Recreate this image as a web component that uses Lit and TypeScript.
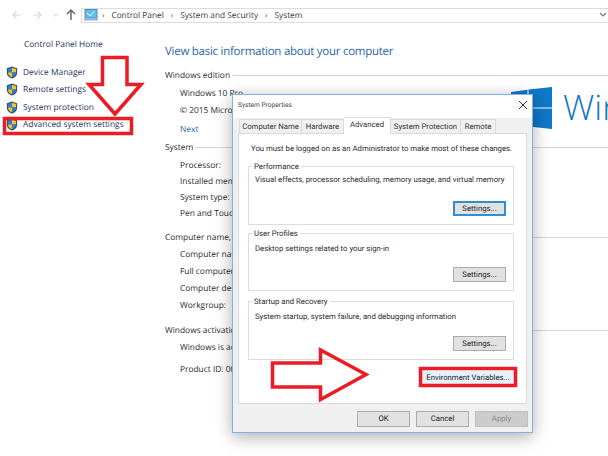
import { LitElement, html, css, svg } from "lit";
import { customElement } from "lit/decorators.js";

const shield = svg`<svg class="shield" width="12" height="13" viewBox="0 0 14 15">
  <path d="M7 .5 L13 2.5 V8 C13 11.500 10 13.500 7 14.500 C4 13.500 1 11.500 1 8 V2.500 Z" fill="#39506e"/>
  <path d="M7 2 V7.500 H2.300 V3.500 Z" fill="#2f7fd0"/>
  <path d="M7 2 L11.700 3.500 V7.500 H7 Z" fill="#f3c334"/>
  <path d="M2.300 7.500 H7 V13 C4.500 12.200 2.300 10.500 2.300 7.500 Z" fill="#f3c334"/>
  <path d="M7 7.500 H11.700 C11.700 10.500 9.500 12.200 7 13 Z" fill="#2f7fd0"/>
</svg>`;

@customElement("app-root")
export class AppRoot extends LitElement {
  static styles = css`
    :host { display: block; position: relative; width: 608px; height: 456px; overflow: hidden; background: #fff;
      font-family: "Open Sans", "Noto Sans", sans-serif; font-size: 8.4px; color: #2b2b2b; text-rendering: geometricPrecision; }
    .nav { display: flex; align-items: center; height: 30px; }
    .arrows { width: 81px; flex: none; display: block; }
    .crumb { flex: 1; height: 15px; border: 1px solid #dcdcdc; border-right: 0; display: flex; align-items: center;
      font-size: 8.3px; color: #3a3a3a; padding-left: 2px; box-sizing: border-box; }
    .crumb .sep { margin: 0 7px 0 4px; font-size: 8px; color: #555; }
    .crumb .sep.w { margin: 0 7px 0 7px; }
    .crumb .pc { margin-right: 0; display: block; }
    .crumb .chev { margin-left: auto; margin-right: 1px; display: block; }
    .body { display: flex; }
    .side { width: 165px; flex: none; padding: 9px 0 0 6px; box-sizing: border-box; color: #27335f; }
    .home { padding-left: 18px; height: 25px; line-height: 12px; }
    .link { height: 17.3px; display: flex; align-items: center; gap: 5px; white-space: nowrap; }
    .main { flex: 1; min-width: 0; padding-top: 13px; }
    h1 { margin: 0 0 8px; font-size: 11.5px; font-weight: 400; color: #2a67a8; line-height: 18px; white-space: nowrap; letter-spacing: -0.26px; }
    .sec { display: flex; align-items: center; gap: 2px; height: 12px; white-space: nowrap; }
    .sec i { flex: 1; height: 1px; background: #d6d6d6; }
    .row { padding-left: 15px; white-space: nowrap; line-height: 12px; }
    .next { color: #2a67a8; margin-top: 7px; }
    .t4 { margin-top: 4px; } .t5 { margin-top: 5px; } .t6 { margin-top: 6px; } .t7 { margin-top: 7px; } .t10 { margin-top: 10px; }
    .t11 { margin-top: 11px; } .t12 { margin-top: 12px; }
    .logo { position: absolute; left: 511px; top: 87px; }
    .wintext { position: absolute; left: 563px; top: 84px; font-size: 35px; line-height: 48px; color: #0f78c8; font-weight: 300; white-space: nowrap; }

    .dlg { position: absolute; left: 232px; top: 94px; width: 301px; height: 339px; box-sizing: border-box; background: #f0f0f0;
      border: 1px solid #7fb2e0; box-shadow: 0 4px 16px rgba(0,0,0,.32); display: flex; flex-direction: column;
      font-family: Roboto, "Open Sans", sans-serif; font-size: 7.75px; }
    .tb { height: 23px; flex: none; background: #fff; display: flex; align-items: center; justify-content: space-between;
      padding: 0 4px 4px 5px; box-sizing: border-box; font-size: 6.6px; color: #444; }
    .tabs { display: flex; height: 15px; margin: 0 0 0 6px; align-items: flex-end; flex: none; color: #333; position: relative; z-index: 1; }
    .tab { height: 14px; line-height: 14px; text-align: center; box-sizing: border-box; border: 1px solid #dadada; border-bottom: 0; border-left-width: 0; background: #f0f0f0; white-space: nowrap; }
    .tab:first-child { border-left-width: 1px; }
    .tab.on { height: 17px; background: #fff; line-height: 13px; margin-bottom: -1px; }
    .panel { margin: 0 5px; height: 271px; box-sizing: border-box; background: #fff; border: 1px solid #dadada; padding: 9px 12px 0 9px; flex: none; }
    .note { line-height: 12px; margin: 0 0 11px 3px; white-space: nowrap; }
    .grp { border: 1px solid #dcdcdc; padding: 5px 7px 0 6px; position: relative; box-sizing: border-box; display: flex; flex-direction: column; justify-content: space-between; }
    .grp .lg { position: absolute; left: 3px; top: -6px; background: #fff; padding: 0 2px; line-height: 11px; }
    .g1 { height: 59px; margin-bottom: 8px; } .g2 { height: 58px; margin-bottom: 10px; } .g3 { height: 59px; margin-bottom: 11px; }
    .grp p { margin: 4px 0 0; line-height: 12px; white-space: nowrap; }
    .g1 p { margin-top: 2px; }
    .btn { height: 15px; line-height: 13px; width: 53px; box-sizing: border-box; border: 1px solid #adadad; background: #e1e1e1; text-align: center; color: #222; align-self: flex-end; margin-bottom: 8px; }
    .btn.focus { border: 2px solid #2d8fd8; line-height: 11px; }
    .envrow { display: flex; justify-content: flex-end; }
    .env { width: 92px; height: 14px; line-height: 14px; background: #e5f1fb; text-align: center; color: #222; white-space: nowrap; }
    .foot { display: flex; justify-content: flex-end; gap: 6px; padding: 7px 4px 0 0; }
    .foot .btn { margin: 0; height: 16px; line-height: 14px; }
    .foot .off { background: #ccc; border-color: #bfbfbf; color: #8a8a8a; }
    .over { position: absolute; left: 0; top: 0; pointer-events: none; }
  `;

  render() {
    return html`
      <div class="nav">
        <svg class="arrows" height="30" viewBox="0 0 81 30">
          <g fill="none" stroke="#d8d8d8" stroke-width="1.2">
            <path d="M21 15 H13 M16.500 11.500 L13 15 L16.500 18.500"/>
            <path d="M33 15 H41 M37.500 11.500 L41 15 L37.500 18.500"/>
            <path d="M53.500 14 L55.500 16 L57.500 14"/>
          </g>
          <path d="M71 20 V10 M67 14 L71 10 L75 14" fill="none" stroke="#6a6a6a" stroke-width="1.5"/>
        </svg>
        <div class="crumb">
          <svg class="pc" width="14" height="12" viewBox="0 0 14 12">
            <rect x="1" y="0.500" width="12" height="8.500" fill="#5cc0ee" stroke="#5c86b8"/>
            <path d="M3 4 L6 7 L10 2.500" stroke="#fff" fill="none"/>
            <rect x="0" y="9.500" width="14" height="2" fill="#8fb2d8"/>
          </svg>
          <span class="sep">›</span>Control Panel<span class="sep w">›</span>System and Security<span class="sep w">›</span>System
          <svg class="chev" width="8" height="6" viewBox="0 0 8 6"><path d="M1 1 L4 4 L7 1" fill="none" stroke="#777" stroke-width="1.2"/></svg>
        </div>
      </div>
      <div class="body">
        <div class="side">
          <div class="home">Control Panel Home</div>
          <div class="link">${shield}Device Manager</div>
          <div class="link">${shield}Remote settings</div>
          <div class="link">${shield}System protection</div>
          <div class="link">${shield}Advanced system settings</div>
        </div>
        <div class="main">
          <h1>View basic information about your computer</h1>
          <div class="sec">Windows edition<i></i></div>
          <div class="row t7">Windows 10 Pro</div>
          <div class="row t5">© 2015 Microsoft Corporation. All rights reserved.</div>
          <div class="row next">Next</div>
          <div class="sec t5">System<i></i></div>
          <div class="row t7">Processor:</div>
          <div class="row t4">Installed memory (RAM):</div>
          <div class="row t4">System type:</div>
          <div class="row t4">Pen and Touch:</div>
          <div class="sec t11">Computer name, domain, and workgroup settings<i></i></div>
          <div class="row t6">Computer name:</div>
          <div class="row t5">Full computer name:</div>
          <div class="row t5">Computer description:</div>
          <div class="row t5">Workgroup:</div>
          <div class="sec t12">Windows activation<i></i></div>
          <div class="row t6">Windows is activated</div>
          <div class="row t10">Product ID: 00330</div>
        </div>
      </div>
      <svg class="logo" width="41" height="42" viewBox="0 0 41 42">
        <path d="M0 5 L16.500 2.800 V20.500 H0 Z M17.500 2.600 L41 0 V20.500 H17.500 Z M0 21.500 H16.500 V39.200 L0 37 Z M17.500 21.500 H41 V42 L17.500 39.400 Z" fill="#0f78c8"/>
      </svg>
      <div class="wintext">Windows</div>

      <div class="dlg">
        <div class="tb">System Properties
          <svg width="10" height="10" viewBox="0 0 10 10"><path d="M1 1 L9 9 M9 1 L1 9" stroke="#333" stroke-width="1"/></svg>
        </div>
        <div class="tabs">
          <div class="tab" style="width:63px">Computer Name</div>
          <div class="tab" style="width:42px">Hardware</div>
          <div class="tab on" style="width:47px">Advanced</div>
          <div class="tab" style="width:70px">System Protection</div>
          <div class="tab" style="width:35px">Remote</div>
        </div>
        <div class="panel">
          <div class="note">You must be logged on as an Administrator to make most of these changes.</div>
          <div class="grp g1"><span class="lg">Performance</span>
            <p>Visual effects, processor scheduling, memory usage, and virtual memory</p>
            <div class="btn focus">Settings...</div>
          </div>
          <div class="grp g2"><span class="lg">User Profiles</span>
            <p>Desktop settings related to your sign-in</p>
            <div class="btn">Settings...</div>
          </div>
          <div class="grp g3"><span class="lg">Startup and Recovery</span>
            <p>System startup, system failure, and debugging information</p>
            <div class="btn">Settings...</div>
          </div>
          <div class="envrow"><div class="env">Environment Variables...</div></div>
        </div>
        <div class="foot">
          <div class="btn">OK</div>
          <div class="btn">Cancel</div>
          <div class="btn off">Apply</div>
        </div>
      </div>

      <svg class="over" width="608" height="456" viewBox="0 0 608 456" fill="none" stroke="#ed1c24" stroke-width="3.5">
        <rect x="4.500" y="118.500" width="127" height="15"/>
        <path d="M102.500 57.500 H127 V84.500 H141 L115 114 L89 84.500 H102.500 Z"/>
        <path d="M272.500 363 H320.500 V350 L366 374.500 L320.500 399.500 V387 H272.500 Z"/>
        <rect x="420.500" y="368.500" width="95" height="17"/>
      </svg>
    `;
  }
}
